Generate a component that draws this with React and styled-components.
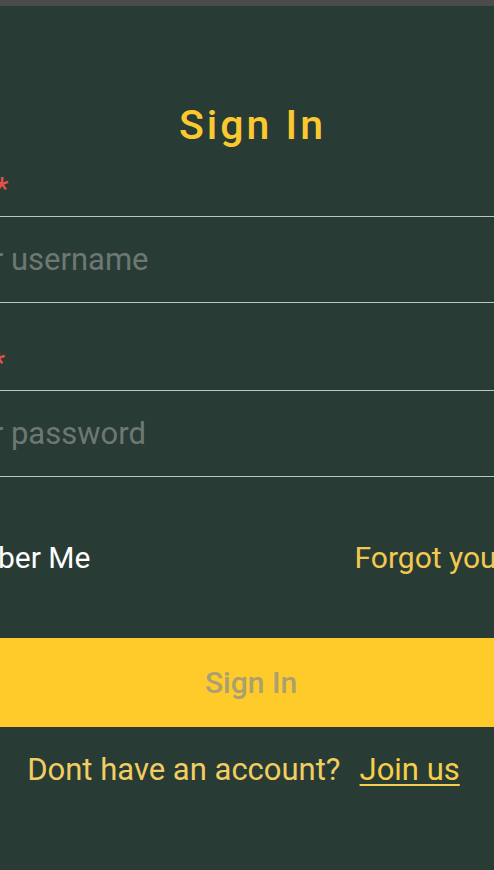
import React from 'react';
import styled, { createGlobalStyle } from 'styled-components';

const GlobalStyle = createGlobalStyle`
    html, body {
        margin: 0;
        padding: 0;
        background: #283c35;
        overflow: hidden;
    }
    body {
        font-family: Roboto, "Noto Sans", Arial, sans-serif;
    }
`;

const Page = styled.div`
    min-height: 870px;
    background: #283c35;
    display: flex;
    flex-direction: column;
`;

const TopBar = styled.div`
    height: 6px;
    background: #4b4b4b;
`;

const Form = styled.form`
    width: 816px;
    margin-left: -157px;
    display: flex;
    flex-direction: column;
`;

const Title = styled.h1`
    margin: 95px 0 0;
    padding-left: 3px;
    height: 48px;
    line-height: 48px;
    font-size: 41px;
    font-weight: 500;
    letter-spacing: 3px;
    text-align: center;
    color: #fbc92f;
`;

const Label = styled.label`
    display: block;
    margin-top: ${(p) => p.$top}px;
    margin-bottom: 9px;
    padding-left: 4px;
    height: 36px;
    line-height: 36px;
    font-size: 31px;
    color: #ffffff;
`;

const Required = styled.span`
    color: #e8524a;
`;

const Input = styled.input`
    box-sizing: border-box;
    width: 100%;
    height: 87px;
    padding: 0 20px;
    border: 1px solid #c0c4c1;
    border-radius: 6px;
    background: transparent;
    font-family: inherit;
    font-size: 31px;
    color: #ffffff;
    outline: none;

    &::placeholder {
        color: #6e7873;
    }
`;

const OptionsRow = styled.div`
    margin-top: 56px;
    height: 48px;
    display: flex;
    align-items: center;
    justify-content: space-between;
    font-size: 30px;
`;

const RememberLabel = styled.label`
    display: flex;
    align-items: center;
    gap: 20px;
    color: #ffffff;
`;

const CheckBox = styled.span`
    width: 28px;
    height: 28px;
    margin-left: 4px;
    border: 2px solid #ffffff;
    border-radius: 3px;
    box-sizing: border-box;
`;

const ForgotLink = styled.a`
    color: #f2c94c;
    text-decoration: none;
`;

const SubmitButton = styled.button`
    margin-top: 57px;
    height: 89px;
    border: none;
    border-radius: 6px;
    background: #fecb2b;
    font-family: inherit;
    font-size: 30px;
    font-weight: 500;
    color: #aaa070;
`;

const Footer = styled.p`
    margin: 23px 0 0;
    padding-right: 15px;
    height: 40px;
    line-height: 40px;
    display: flex;
    justify-content: center;
    font-size: 31px;
    color: #f2cd62;
`;

const JoinLink = styled.a`
    margin-left: 19px;
    color: #f6cf48;
    text-decoration: underline;
    text-underline-offset: 4px;
    text-decoration-thickness: 2px;
`;

export default function App() {
    return (
        <>
        <GlobalStyle />
        <Page>
            <TopBar />
            <Form onSubmit={(e) => e.preventDefault()}>
                <Title>Sign In</Title>

                <Label $top={22} htmlFor="username">Username <Required>*</Required></Label>
                <Input id="username" placeholder="Enter your username" />

                <Label $top={42} htmlFor="password">Password <Required>*</Required></Label>
                <Input id="password" type="password" placeholder="Enter your password" />

                <OptionsRow>
                    <RememberLabel>
                        <CheckBox />
                        Remember Me
                    </RememberLabel>
                    <ForgotLink href="#">Forgot your password?</ForgotLink>
                </OptionsRow>

                <SubmitButton type="submit" disabled>Sign In</SubmitButton>

                <Footer>
                    Dont have an account?
                    <JoinLink href="#">Join us</JoinLink>
                </Footer>
            </Form>
        </Page>
        </>
    );
}
